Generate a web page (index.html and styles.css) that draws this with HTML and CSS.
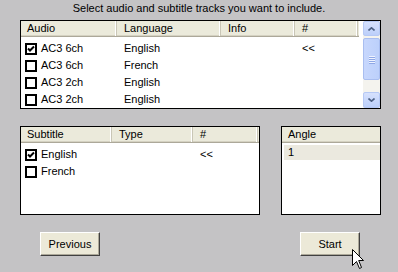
FILE: index.html
```html
<!DOCTYPE html>
<html>
<head>
<meta charset="utf-8">
<link rel="stylesheet" href="styles.css">
</head>
<body>
<div class="page">
  <div class="title">Select audio and subtitle tracks you want to include.</div>

  <div class="box audio">
    <div class="list">
      <div class="grid audio-cols head">
        <div class="hc first">Audio</div>
        <div class="hc">Language</div>
        <div class="hc">Info</div>
        <div class="hc">#</div>
      </div>
      <div class="rows">
        <div class="grid audio-cols row">
          <div class="cell first"><span class="cb"><svg viewBox="0 0 8 8" width="8" height="8"><path d="M1 3.5 L3 5.5 L7 1.5" fill="none" stroke="#000" stroke-width="2"/></svg></span>AC3 6ch</div>
          <div class="cell">English</div><div class="cell"></div><div class="cell">&lt;&lt;</div>
        </div>
        <div class="grid audio-cols row">
          <div class="cell first"><span class="cb"></span>AC3 6ch</div>
          <div class="cell">French</div><div class="cell"></div><div class="cell"></div>
        </div>
        <div class="grid audio-cols row">
          <div class="cell first"><span class="cb"></span>AC3 2ch</div>
          <div class="cell">English</div><div class="cell"></div><div class="cell"></div>
        </div>
        <div class="grid audio-cols row">
          <div class="cell first"><span class="cb"></span>AC3 2ch</div>
          <div class="cell">English</div><div class="cell"></div><div class="cell"></div>
        </div>
      </div>
    </div>
    <div class="scrollbar">
      <div class="sbtn up"><svg viewBox="0 0 7 4" width="7" height="4"><path d="M0.5 3.5 L3.5 0.8 L6.5 3.5" fill="none" stroke="#4d6185" stroke-width="1.6"/></svg></div>
      <div class="thumb"><span class="grip"></span><span class="grip"></span><span class="grip"></span><span class="grip"></span></div>
      <div class="track"></div>
      <div class="sbtn down"><svg viewBox="0 0 7 4" width="7" height="4"><path d="M0.5 0.5 L3.5 3.2 L6.5 0.5" fill="none" stroke="#4d6185" stroke-width="1.6"/></svg></div>
    </div>
  </div>

  <div class="middle">
    <div class="box subtitle">
      <div class="grid sub-cols head">
        <div class="hc first">Subtitle</div>
        <div class="hc">Type</div>
        <div class="hc">#</div>
      </div>
      <div class="rows sub-rows">
        <div class="grid sub-cols row">
          <div class="cell first"><span class="cb"><svg viewBox="0 0 8 8" width="8" height="8"><path d="M1 3.5 L3 5.5 L7 1.5" fill="none" stroke="#000" stroke-width="2"/></svg></span>English</div>
          <div class="cell"></div><div class="cell">&lt;&lt;</div>
        </div>
        <div class="grid sub-cols row">
          <div class="cell first"><span class="cb"></span>French</div>
          <div class="cell"></div><div class="cell"></div>
        </div>
      </div>
    </div>
    <div class="box angle">
      <div class="head angle-head"><div class="hc first">Angle</div></div>
      <div class="angle-row">1</div>
    </div>
  </div>

  <div class="buttons">
    <button class="btn">Previous</button>
    <button class="btn">Start</button>
  </div>

  <svg class="cursor" viewBox="0 0 13 21" width="13" height="21"><path d="M0.5 0.5 L0.5 16.5 L4.5 12.5 L7.5 19.5 L9.5 18.5 L6.7 11.5 L11.5 11.5 Z" fill="#fff" stroke="#000" stroke-width="1"/></svg>
</div>
</body>
</html>
```

FILE: styles.css
```css
body {
  margin: 0;
}

.page {
  position: relative;
  width: 398px;
  height: 272px;
  background: #c4c3c5;
  font-family: "Liberation Sans", Arial, sans-serif;
  font-size: 11px;
  color: #000;
  overflow: hidden;
}

.title {
  height: 20px;
  line-height: 17px;
  text-align: center;
}

.box {
  box-sizing: border-box;
  border: 1px solid #000;
  background: #fff;
}

.audio {
  margin-left: 20px;
  width: 361px;
  height: 89px;
  display: flex;
}

.list {
  flex: 1;
}

.grid {
  display: grid;
}

.audio-cols {
  grid-template-columns: 96px 104px 74px 63px;
}

.sub-cols {
  grid-template-columns: 91px 81px 65px;
}

.head {
  box-sizing: border-box;
  height: 16px;
  background: #ebeadb;
  border-bottom: 1px solid #aca899;
  box-shadow: inset 0 -1px #d5d2c2;
}

.hc {
  box-sizing: border-box;
  height: 15px;
  line-height: 15px;
  padding-left: 7px;
  border-right: 1px solid #c9c6b6;
  box-shadow: inset -1px 0 #fff;
  white-space: nowrap;
}

.hc.first {
  padding-left: 6px;
}

.angle-head .hc {
  border-right: none;
  box-shadow: none;
}

.rows {
  padding-top: 3px;
}

.sub-rows {
  padding-top: 3px;
}

.row {
  height: 17px;
  line-height: 17px;
}

.cell {
  padding-left: 7px;
  white-space: nowrap;
}

.cell.first {
  padding-left: 4px;
  display: flex;
  align-items: center;
}

.cb {
  box-sizing: border-box;
  width: 12px;
  height: 12px;
  border: 2px solid #000;
  background: #fff;
  margin-right: 4px;
  display: flex;
  align-items: center;
  justify-content: center;
}

.scrollbar {
  width: 17px;
  margin-left: 4px;
  display: flex;
  flex-direction: column;
  background: #f4f3ee;
}

.sbtn {
  box-sizing: border-box;
  height: 15px;
  border: 1px solid #b6c9f5;
  border-radius: 2px;
  background: linear-gradient(#d6e1fd, #bccffa);
  display: flex;
  align-items: center;
  justify-content: center;
}

.sbtn.down {
  height: 16px;
}

.thumb {
  box-sizing: border-box;
  margin-top: 2px;
  height: 42px;
  border: 1px solid #a9bef0;
  border-radius: 2px;
  background: linear-gradient(90deg, #c7d7fd, #bcd0fb);
  display: flex;
  flex-direction: column;
  align-items: center;
  justify-content: center;
  gap: 1px;
}

.grip {
  width: 6px;
  height: 1px;
  background: #eef3ff;
  box-shadow: 0 1px #8fa8e6;
}

.track {
  flex: 1;
}

.middle {
  margin-top: 17px;
  margin-left: 20px;
  display: flex;
  gap: 21px;
}

.subtitle {
  width: 240px;
  height: 89px;
}

.angle {
  width: 100px;
  height: 89px;
}

.angle-row {
  margin: 2px 0 0 2px;
  height: 15px;
  line-height: 15px;
  padding-left: 4px;
  background: #ebe9df;
}

.buttons {
  margin-top: 17px;
  padding-left: 40px;
  display: flex;
  gap: 200px;
}

.btn {
  box-sizing: border-box;
  width: 60px;
  height: 24px;
  margin: 0;
  padding: 0;
  font-family: "Liberation Sans", Arial, sans-serif;
  font-size: 11px;
  color: #000;
  background: #ece9d8;
  border: 1px solid;
  border-color: #fff #404040 #404040 #fff;
  box-shadow: inset -1px -1px #aca899;
}

.cursor {
  position: absolute;
  left: 352px;
  top: 249px;
}
```
